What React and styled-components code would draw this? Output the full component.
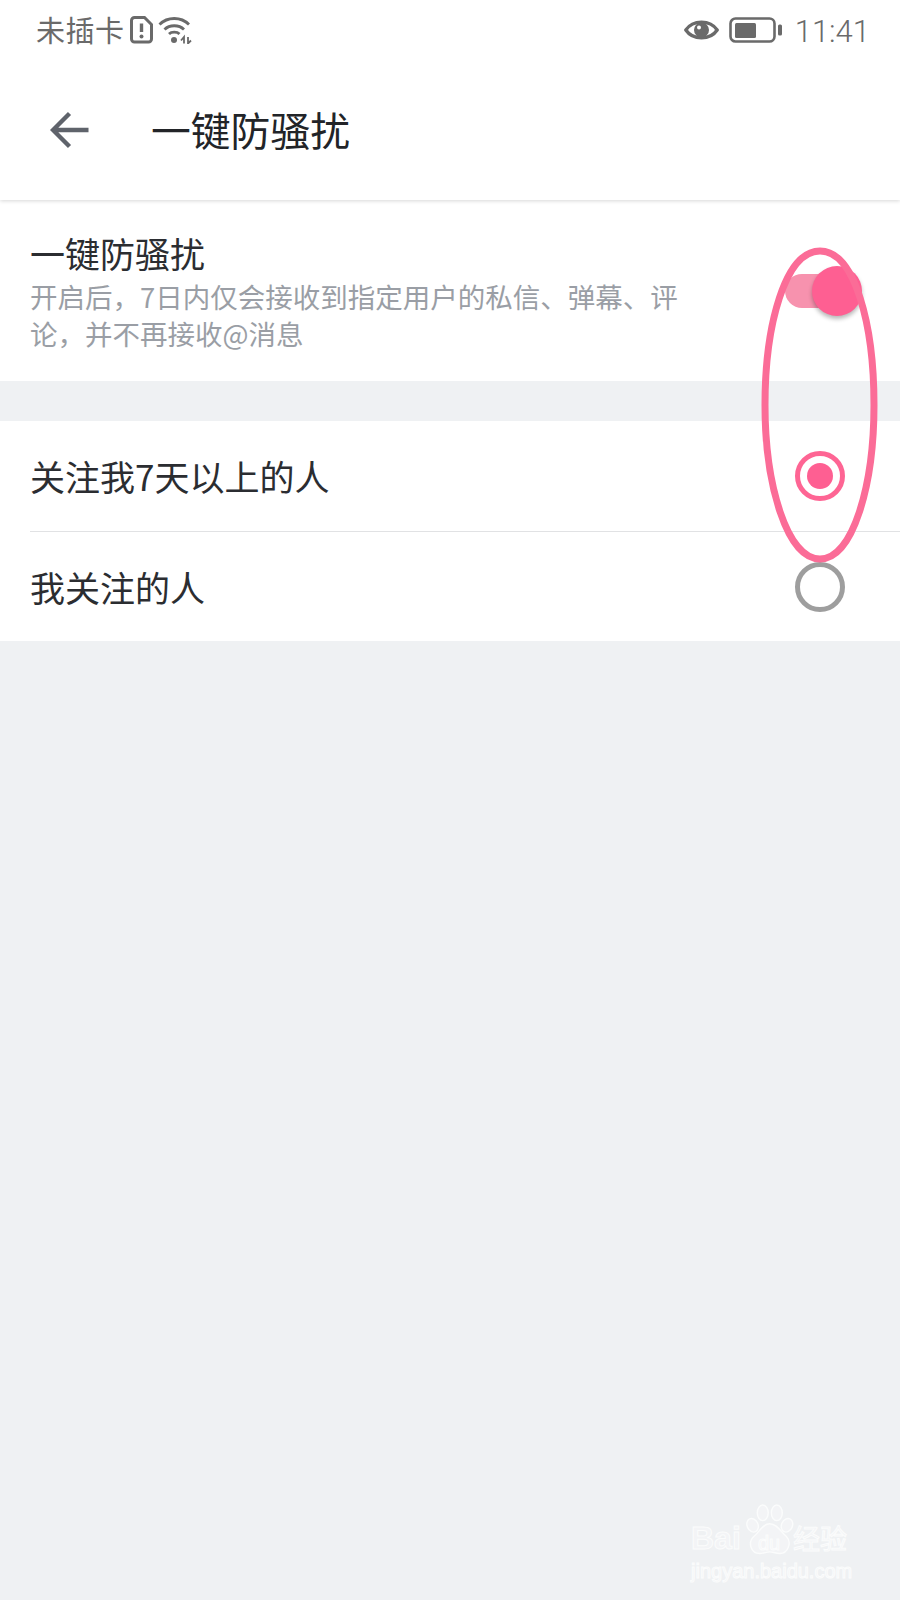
import styled, { createGlobalStyle } from "styled-components";

const CJK = `"Noto Sans CJK SC", "Noto Sans", sans-serif`;

const GlobalStyle = createGlobalStyle`
  html, body {
    margin: 0;
    padding: 0;
    background: #eff1f3;
    font-family: ${CJK};
  }
`;

const Page = styled.div`
  position: relative;
  width: 900px;
  height: 1600px;
  overflow: hidden;
  background: #eff1f3;
`;

const Header = styled.header`
  background: #fff;
  height: 200px;
  box-shadow: 0 1px 4px rgba(0, 0, 0, 0.16);
  position: relative;
`;

const StatusBar = styled.div`
  height: 60px;
  padding: 0 30px 0 36px;
  display: flex;
  align-items: center;
  justify-content: space-between;
  color: #6a6a6a;
`;

const StatusGroup = styled.div`
  display: flex;
  align-items: center;
  gap: ${(p) => p.$gap}px;
`;

const CarrierGroup = styled(StatusGroup)`
  svg:first-of-type {
    margin-left: 0;
  }
`;

const Carrier = styled.span`
  font-size: 29px;
  line-height: 1;
  letter-spacing: 0.5px;
  padding-bottom: 2px;
`;

const Clock = styled.span`
  font-family: Roboto, "Liberation Sans", sans-serif;
  font-weight: 300;
  font-size: 31px;
  line-height: 1;
  margin-left: 3px;
  padding-top: 3px;
`;

const NavBar = styled.div`
  height: 140px;
  display: flex;
  align-items: center;
  padding-left: 50px;
  gap: 61px;
`;

const NavTitle = styled.h1`
  margin: 0;
  padding-bottom: 3px;
  font-size: 39.8px;
  font-weight: 400;
  line-height: 1;
  color: #222428;
`;

const Section = styled.section`
  background: #fff;
  margin-top: ${(p) => p.$top || 0}px;
`;

const SettingRow = styled.div`
  display: flex;
  align-items: center;
  justify-content: space-between;
  padding: 0 39px 0 30px;
`;

const SettingText = styled.div`
  width: 660px;
  padding: 33px 0 30px;
`;

const RowTitle = styled.div`
  font-size: 35px;
  line-height: 40px;
  color: #2b2d31;
`;

const Hint = styled.p`
  margin: 5px 0 0;
  font-size: 27.5px;
  line-height: 36.5px;
  color: #9a9ea5;
`;

const Toggle = styled.div`
  position: relative;
  width: 62px;
  height: 34px;
  margin-right: 14px;
  border-radius: 17px;
  background: #f792ae;
`;

const Thumb = styled.div`
  position: absolute;
  top: -8px;
  right: -15px;
  width: 50px;
  height: 50px;
  border-radius: 50%;
  background: #fe5f92;
  box-shadow: 0 3px 4px rgba(0, 0, 0, 0.28);
`;

const OptionRow = styled.div`
  height: ${(p) => p.$height}px;
  margin-left: 30px;
  padding-right: 55px;
  display: flex;
  align-items: center;
  justify-content: space-between;
  border-bottom: ${(p) => (p.$divider ? "1px solid #e1e2e4" : "none")};
`;

const OptionLabel = styled.span`
  font-size: 35px;
  line-height: 40px;
  color: #2b2d31;
`;

const Radio = styled.span`
  box-sizing: border-box;
  width: 50px;
  height: 50px;
  border-radius: 50%;
  border: 5px solid ${(p) => (p.$checked ? "#fe6594" : "#9e9e9e")};
  display: flex;
  align-items: center;
  justify-content: center;
  &::after {
    content: "";
    display: ${(p) => (p.$checked ? "block" : "none")};
    width: 26px;
    height: 26px;
    border-radius: 50%;
    background: #fe5f92;
  }
`;

const Annotation = styled.svg`
  position: absolute;
  left: 755px;
  top: 240px;
  pointer-events: none;
`;

const Watermark = styled.div`
  position: absolute;
  left: 691px;
  top: 1500px;
  width: 165px;
  height: 84px;
`;

const WatermarkPaw = styled.svg`
  position: absolute;
  left: 53px;
  top: 2px;
`;

const Ghost = styled.span`
  position: absolute;
  left: ${(p) => p.$left}px;
  top: ${(p) => p.$top}px;
  font-family: ${(p) => p.$font || `"Liberation Sans", sans-serif`};
  font-size: ${(p) => p.$size}px;
  font-weight: ${(p) => p.$weight || 400};
  line-height: 1;
  white-space: nowrap;
  color: #f3f4f6;
  -webkit-text-stroke: 1px #fbfcfc;
`;

const SimIcon = () => (
  <svg width="23" height="28" viewBox="0 0 23 28" fill="none">
    <path
      d="M4.500 1.500H14.500L21.500 8.500V23a3 3 0 0 1-3 3H4.500a3 3 0 0 1-3-3V4.500a3 3 0 0 1 3-3Z"
      stroke="#6a6a6a"
      strokeWidth="3"
    />
    <path d="M11.500 7.500V16" stroke="#6a6a6a" strokeWidth="3.400" />
    <circle cx="11.500" cy="20.500" r="2" fill="#6a6a6a" />
  </svg>
);

const WifiIcon = () => (
  <svg width="34" height="28" viewBox="0 0 34 28" fill="none">
    <path d="M1.500 8.500C9.500 0.500 23 0.500 31 8.500" stroke="#6a6a6a" strokeWidth="2.800" />
    <path d="M6.500 13.500C11.500 8.500 21 8.500 26 13.500" stroke="#6a6a6a" strokeWidth="2.800" />
    <path d="M11 18C13.500 15.500 19 15.500 21.500 18" stroke="#6a6a6a" strokeWidth="2.800" />
    <circle cx="16" cy="24" r="3" fill="#6a6a6a" />
    <path d="M23 24.500L26 21V27.500M30 21V27.500L33 24.500" stroke="#6a6a6a" strokeWidth="1.800" />
  </svg>
);

const EyeIcon = () => (
  <svg width="35" height="24" viewBox="0 0 35 24" fill="none">
    <path
      d="M1.800 12C9 1.500 26 1.500 33.200 12C26 22.500 9 22.500 1.800 12Z"
      stroke="#6a6a6a"
      strokeWidth="3.400"
      strokeLinejoin="round"
    />
    <circle cx="17.500" cy="12" r="7.500" fill="#6a6a6a" />
    <circle cx="15" cy="9.500" r="2" fill="#fff" />
  </svg>
);

const BatteryIcon = () => (
  <svg width="53" height="26" viewBox="0 0 53 26" fill="none">
    <rect x="1.500" y="1.500" width="44" height="23" rx="5" stroke="#6a6a6a" strokeWidth="2.600" />
    <rect x="6" y="6" width="21" height="15" rx="1.500" fill="#6a6a6a" />
    <rect x="49" y="7.500" width="4" height="11" rx="1.500" fill="#6a6a6a" />
  </svg>
);

const BackIcon = () => (
  <svg width="40" height="40" viewBox="0 0 40 40" fill="none">
    <path
      d="M38.500 20H3M19.500 3.500L3 20L19.500 36.500"
      stroke="#5f636b"
      strokeWidth="4.400"
    />
  </svg>
);

const Layout = () => {
  return (
    <Page>
      <GlobalStyle />
      <Header>
        <StatusBar>
          <CarrierGroup $gap={5}>
            <Carrier>未插卡</Carrier>
            <SimIcon />
            <WifiIcon />
          </CarrierGroup>
          <StatusGroup $gap={10}>
            <EyeIcon />
            <BatteryIcon />
            <Clock>11:41</Clock>
          </StatusGroup>
        </StatusBar>
        <NavBar>
          <BackIcon />
          <NavTitle>一键防骚扰</NavTitle>
        </NavBar>
      </Header>

      <Section>
        <SettingRow>
          <SettingText>
            <RowTitle>一键防骚扰</RowTitle>
            <Hint>开启后，7日内仅会接收到指定用户的私信、弹幕、评论，并不再接收@消息</Hint>
          </SettingText>
          <Toggle>
            <Thumb />
          </Toggle>
        </SettingRow>
      </Section>

      <Section $top={40}>
        <OptionRow $height={110} $divider>
          <OptionLabel>关注我7天以上的人</OptionLabel>
          <Radio $checked />
        </OptionRow>
        <OptionRow $height={109}>
          <OptionLabel>我关注的人</OptionLabel>
          <Radio />
        </OptionRow>
      </Section>

      <Annotation width="130" height="330" viewBox="0 0 130 330" fill="none">
        <path
          d="M65 11C30 11 10 85 10 165C10 245 32 319 65 319C98 319 119 245 119 165C119 85 100 11 65 11Z"
          stroke="#fb6c97"
          strokeWidth="7"
        />
      </Annotation>

      <Watermark>
        <WatermarkPaw width="50" height="56" viewBox="0 0 64 66" fill="#f3f4f6" stroke="#fbfcfc" strokeWidth="1.800">
          <ellipse cx="11" cy="27" rx="7" ry="9" transform="rotate(-25 11 27)" />
          <ellipse cx="24" cy="11" rx="7" ry="10" />
          <ellipse cx="42" cy="11" rx="7" ry="10" />
          <ellipse cx="55" cy="27" rx="7" ry="9" transform="rotate(25 55 27)" />
          <path d="M33 25C42 25 47 35 54 41C62 49 56 63 46 63C40 63 37 61 33 61C29 61 25 63 20 63C9 63 4 49 13 41C20 35 24 25 33 25Z" />
        </WatermarkPaw>
        <Ghost $left={0} $top={22} $size={32} $weight={700}>Bai</Ghost>
        <Ghost $left={67} $top={33} $size={20}>du</Ghost>
        <Ghost $left={102} $top={24} $size={27} $font={CJK}>经验</Ghost>
        <Ghost $left={0} $top={61} $size={20}>jingyan.baidu.com</Ghost>
      </Watermark>
    </Page>
  );
};

export default Layout;
